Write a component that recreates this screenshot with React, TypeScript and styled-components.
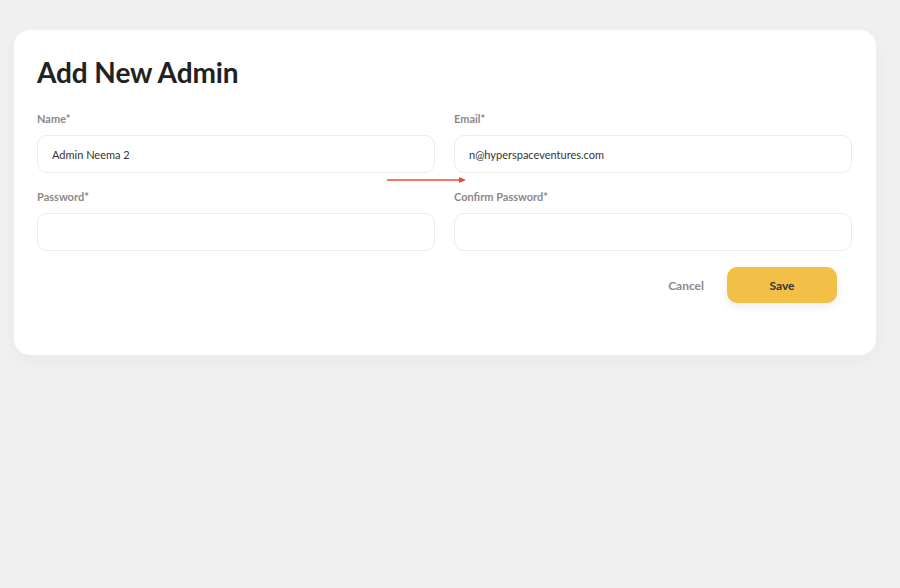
import React from "react";
import styled, { createGlobalStyle } from "styled-components";

const Global = createGlobalStyle`
  html, body { margin: 0; padding: 0; background: #f0f0f0; }
  body { font-family: "Lato", "Noto Sans", sans-serif; -webkit-font-smoothing: antialiased; }
  * { box-sizing: border-box; }
`;

const Page = styled.div`
  min-height: 588px;
  padding: 30px 24px 0 14px;
  background: #f0f0f0;
`;

const Card = styled.section`
  position: relative;
  background: #ffffff;
  border-radius: 16px;
  box-shadow: 0 6px 18px rgba(0, 0, 0, 0.03);
  padding: 25px 24px 52px 23px;
`;

const Title = styled.h1`
  margin: 0 0 23px 0;
  font-size: 28px;
  line-height: 34px;
  font-weight: 700;
  color: #222222;
  letter-spacing: -0.1px;
`;

const Grid = styled.div`
  display: grid;
  grid-template-columns: 1fr 1fr;
  column-gap: 19px;
  row-gap: 17px;
`;

const Field = styled.div`
  display: flex;
  flex-direction: column;
  gap: 9px;
`;

const Label = styled.label`
  font-size: 11px;
  line-height: 14px;
  font-weight: 700;
  color: #8a8a8a;
`;

const Input = styled.input`
  height: 38px;
  border: 1px solid #ececec;
  border-radius: 10px;
  padding: 0 14px;
  font-family: inherit;
  font-size: 11px;
  color: #333333;
  background: #ffffff;
  outline: none;
`;

const Actions = styled.div`
  display: flex;
  justify-content: flex-end;
  align-items: center;
  gap: 23px;
  margin-top: 16px;
  padding-right: 15px;
`;

const CancelButton = styled.button`
  border: none;
  background: transparent;
  font-family: inherit;
  font-size: 12px;
  font-weight: 700;
  color: #8a8a8a;
  padding: 0;
  cursor: pointer;
`;

const SaveButton = styled.button`
  width: 110px;
  height: 36px;
  border: none;
  border-radius: 10px;
  background: #f2c046;
  font-family: inherit;
  font-size: 12px;
  font-weight: 700;
  color: #333333;
  box-shadow: 0 4px 10px rgba(0, 0, 0, 0.07);
  cursor: pointer;
`;

const Arrow = styled.svg`
  position: absolute;
  left: 373px;
  top: 146px;
`;

export default function App() {
  return (
    <>
      <Global />
      <Page>
        <Card>
          <Title>Add New Admin</Title>
          <Grid>
            <Field>
              <Label>Name*</Label>
              <Input defaultValue="Admin Neema 2" />
            </Field>
            <Field>
              <Label>Email*</Label>
              <Input defaultValue="n@hyperspaceventures.com" />
            </Field>
            <Field>
              <Label>Password*</Label>
              <Input type="password" />
            </Field>
            <Field>
              <Label>Confirm Password*</Label>
              <Input type="password" />
            </Field>
          </Grid>
          <Actions>
            <CancelButton>Cancel</CancelButton>
            <SaveButton>Save</SaveButton>
          </Actions>
          <Arrow width="82" height="8" viewBox="0 0 82 8">
            <line x1="0" y1="4" x2="74" y2="4" stroke="#ee4a30" strokeWidth="1.3" />
            <polygon points="72,1 79,4 72,7" fill="#ee4a30" />
          </Arrow>
        </Card>
      </Page>
    </>
  );
}
